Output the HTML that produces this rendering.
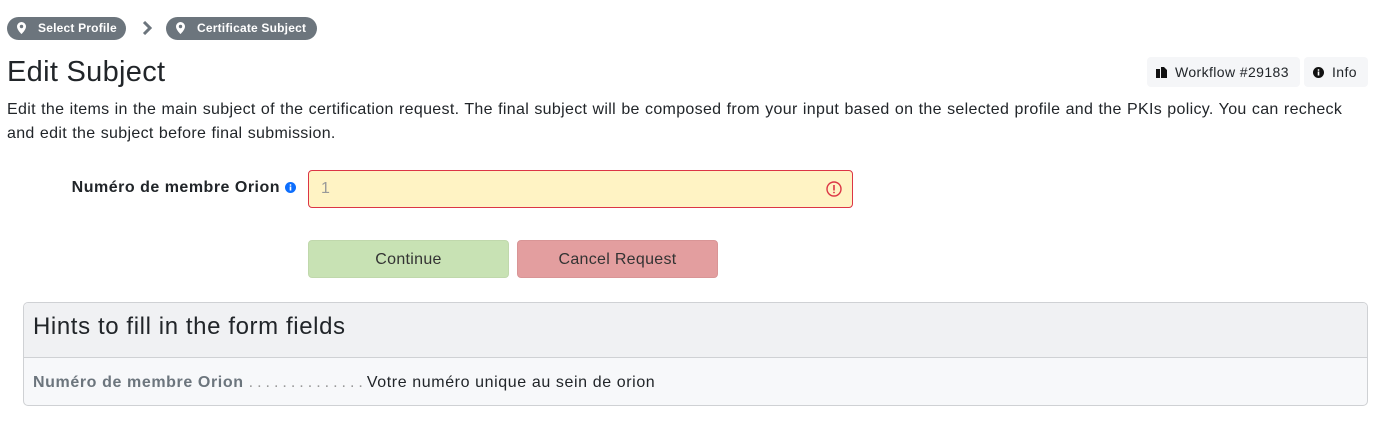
<!DOCTYPE html>
<html><head><meta charset="utf-8"><style>
body{margin:0;width:1378px;height:426px;background:#fff;font-family:"Liberation Sans","DejaVu Sans",sans-serif;color:#212529;position:relative;overflow:hidden}
.pill{position:absolute;top:17px;height:23px;background:#6c757d;color:#fff;border-radius:12px;font-size:12px;font-weight:bold;line-height:23px;padding:0 9px 0 31px;box-sizing:border-box;letter-spacing:0.2px}
.pill svg{position:absolute;left:10px;top:5px}
h1{position:absolute;left:7px;top:55px;margin:0;font-size:29px;font-weight:normal;line-height:34px;letter-spacing:0.3px}
.tb{position:absolute;top:57px;height:30px;background:#f5f6f8;border-radius:4px;font-size:14px;line-height:30px;box-sizing:border-box;padding-left:28px;letter-spacing:0.4px}
p{position:absolute;left:7px;top:98px;margin:0;width:1360px;font-size:16px;line-height:24px;letter-spacing:0.32px;word-spacing:0.5px}
.lbl{position:absolute;left:0;width:296px;text-align:right;top:179px;font-size:16px;font-weight:bold;letter-spacing:0.5px}
.inp{position:absolute;left:308px;top:170px;width:545px;height:38px;box-sizing:border-box;border:1px solid #dc3545;border-radius:4px;background:#fff3c4;color:#999;font-size:16px;line-height:36px;padding-left:12px}
.btn{position:absolute;top:240px;height:38px;border-radius:4px;box-sizing:border-box;font-size:16px;line-height:37px;text-align:center;color:#333;letter-spacing:0.3px}
.card{position:absolute;left:23px;top:302px;width:1345px;height:104px;box-sizing:border-box;border:1px solid #cfd1d4;border-radius:5px;background:#f7f8fa;overflow:hidden}
.ch{height:54px;background:#f0f1f3;border-bottom:1px solid #cfd1d4;font-size:24px;line-height:48px;padding-left:9px;letter-spacing:0.6px}
.cb{padding-left:9px;font-size:16px;line-height:50px;letter-spacing:0.6px}
</style></head><body>
<div class="pill" style="left:7px;width:119px"><svg width="9" height="12" viewBox="0 0 9 12"><path d="M4.5 0A4.5 4.5 0 0 0 0 4.5C0 8 4.5 12 4.5 12S9 8 9 4.5A4.5 4.5 0 0 0 4.5 0z" fill="#fff"/><circle cx="4.5" cy="4.5" r="1.7" fill="#6c757d"/></svg>Select Profile</div>
<svg style="position:absolute;left:142px;top:21px" width="10" height="14" viewBox="0 0 10 14"><path d="M2 1l6 6-6 6" stroke="#6c757d" stroke-width="3" fill="none"/></svg>
<div class="pill" style="left:166px;width:151px"><svg width="9" height="12" viewBox="0 0 9 12"><path d="M4.5 0A4.5 4.5 0 0 0 0 4.5C0 8 4.5 12 4.5 12S9 8 9 4.5A4.5 4.5 0 0 0 4.5 0z" fill="#fff"/><circle cx="4.5" cy="4.5" r="1.7" fill="#6c757d"/></svg>Certificate Subject</div>
<h1>Edit Subject</h1>
<div class="tb" style="left:1147px;width:153px"><svg style="position:absolute;left:9px;top:10px" width="11" height="11" viewBox="0 0 11 11"><path d="M0 2h4v9H0zM5 0h3l3 3v8H5z" fill="#111"/></svg>Workflow #29183</div>
<div class="tb" style="left:1304px;width:64px"><svg style="position:absolute;left:9px;top:10px" width="11" height="11" viewBox="0 0 11 11"><circle cx="5.5" cy="5.5" r="5.5" fill="#111"/><rect x="4.7" y="4.5" width="1.6" height="4" fill="#fff"/><circle cx="5.5" cy="3" r="0.9" fill="#fff"/></svg>Info</div>
<p>Edit the items in the main subject of the certification request. The final subject will be composed from your input based on the selected profile and the PKIs policy. You can recheck and edit the subject before final submission.</p>
<div class="lbl">Numéro de membre Orion <svg style="vertical-align:-1px" width="11" height="11" viewBox="0 0 11 11"><circle cx="5.5" cy="5.5" r="5.5" fill="#0d6efd"/><rect x="4.7" y="4.5" width="1.6" height="4" fill="#fff"/><circle cx="5.5" cy="3" r="0.9" fill="#fff"/></svg></div>
<div class="inp">1<svg style="position:absolute;right:10px;top:10px" width="16" height="16" viewBox="0 0 16 16"><circle cx="8" cy="8" r="7" stroke="#dc3545" stroke-width="1.4" fill="none"/><rect x="7.2" y="4" width="1.6" height="5.5" fill="#dc3545"/><circle cx="8" cy="11.5" r="0.9" fill="#dc3545"/></svg></div>
<div class="btn" style="left:308px;width:201px;background:#c8e2b4;border:1px solid #c0d8ac">Continue</div>
<div class="btn" style="left:517px;width:201px;background:#e39e9f;border:1px solid #d99596">Cancel Request</div>
<div class="card"><div class="ch">Hints to fill in the form fields</div><div class="cb"><b style="color:#6c757d">Numéro de membre Orion</b> <span style="color:#999;letter-spacing:4px"> ..............</span>Votre numéro unique au sein de orion</div></div>
</body></html>
